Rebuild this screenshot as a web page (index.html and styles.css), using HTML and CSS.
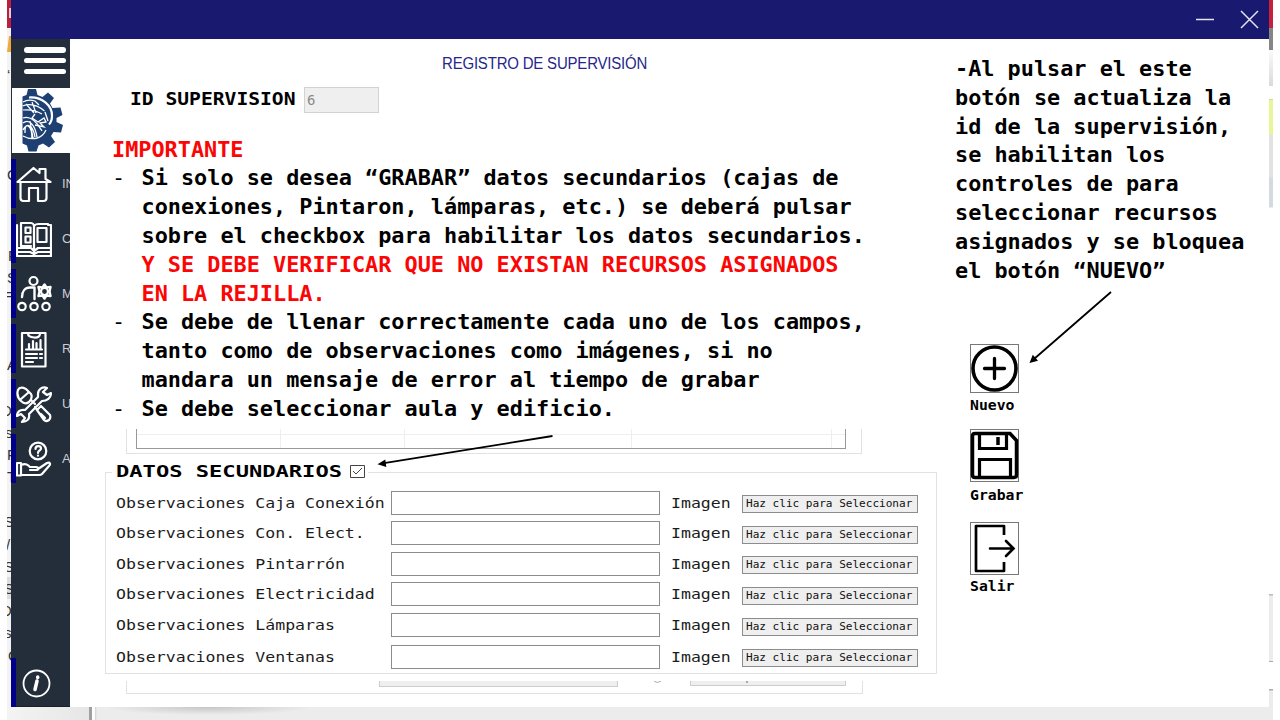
FILE: index.html
```html
<!DOCTYPE html>
<html lang="es">
<head>
<meta charset="utf-8">
<title>Registro de supervisión</title>
<link rel="stylesheet" href="styles.css">
</head>
<body>
<div class="desktop">
  <svg class="edge-left" width="4" height="720" viewBox="7 0 4 720">
    <rect x="7" width="4" height="720" fill="#f3f3f3"/>
    <rect x="7" width="4" height="28" fill="#b9203a"/>
    <path d="M10 8v10" stroke="#fff" stroke-width="1.5"/>
    <path d="M7 52l2-16h2v16z" fill="#f2a93b"/>
    <rect x="7" y="577" width="4" height="22" fill="#ddd"/>
    <g class="edge-text">
      <text x="7" y="80">‘</text><text x="7" y="180">C</text><text x="8" y="261">F</text><text x="7" y="283">S</text><text x="4" y="300">=</text>
      <text x="7" y="370">A</text><text x="1" y="416">D</text><text x="5" y="438">si</text><text x="7" y="460">F</text><text x="7" y="482">T</text>
      <text x="4" y="527">S</text><text x="6" y="550">/</text><text x="4" y="572">S</text><text x="4" y="594">S</text><text x="1" y="616">D</text><text x="4" y="638">s</text><text x="8" y="661">C</text>
    </g>
  </svg>
  <div class="window">
    <header class="titlebar">
      <svg width="66" height="20" viewBox="0 0 66 20" fill="none" stroke="#e4e4f4" stroke-width="1.5">
        <path d="M0 9.5h18M45 1l17 17M62 1L45 18"/>
      </svg>
    </header>
    <div class="body">
      <nav class="sidebar">
        <div class="burger"><i></i><i></i><i></i></div>
        <div class="logo">
          <svg width="58" height="64" viewBox="12 89 58 64">
            <path fill="#1d3f72" d="M22.500 97.500l4-1.500 1.500-6h8l1.500 6 5 2 5.500-4.500 6 5.500-4 5.500 2.500 4.500 8-.5 2 7.500-6 3v4l6.500 3-2 7.500-7.500-.5-2.500 4 4 6-6 5.500-6-4-4.500 2-2 6h-8l-1.500-6-4.500-2z"/>
            <g fill="none" stroke="#fff">
              <path d="M29 98.500c13-1 23 8 23 18 0 6-3 9-3 9" stroke-width="2.200"/>
              <path d="M22.500 107c8-3 16 0 22 5M23 111c9-1 14 1 19 4M23 103c5-3 9-2 12-1l4 4M26 105l8 9M32 103l4 11" stroke-width="1.200"/>
              <path d="M35 115l-3 4 6 4 6-4 2 4-6 1 4 4-9-2M45 113l3 9" stroke-width="1.300"/>
              <path d="M23 119c8-3 14 4 19 13M23 124c6-5 12 2 14 14M25 134c-1-12 7-9 7 6M23 131c4-8 10-5 12 7M23 137c9 5 19 3 23-6M30 122l3 17" stroke-width="1.300"/>
            </g>
          </svg>
        </div>
        <a class="item"><svg class="ico" viewBox="16 159 36 49"><path d="M17.500 182l16-14 6 5v-4h6v10l5 3zM20.500 183v15q0 3 3 3h5.500v-13h9v13h5.500q3 0 3-3v-15"/></svg><span>INICIO</span></a>
        <a class="item"><svg class="ico" viewBox="16 159 36 49"><path d="M21 168h10c2 0 3 2 3 3 1-2 3-2 5-2h9M21 168v23h10M17 170v31h34V170h-3M34 171v26M37.500 173h9v14h-9zM25.500 172.500h5v5.500h-5zM25.500 181.500h5v6h-5zM17 193h14l3 3 4-3h13M17 197h13l4 2 4-2h13"/></svg><span>CATÁLOGO</span></a>
        <a class="item"><svg class="ico" viewBox="16 159 36 49"><circle cx="33.500" cy="171" r="4"/><circle cx="22" cy="196.500" r="3.700"/><circle cx="34" cy="196.500" r="3.700"/><circle cx="46" cy="196.500" r="3.700"/><circle cx="44.500" cy="181.500" r="3.500"/><path d="M44.500 174.500l2 3 4-.5-1 4.500 1 4.500-4-.5-2 3-2-3-4 .5 1-4.500-1-4.500 4 .5zM34.500 189v-11.500H30c-5 0-8 4-8 9.500" stroke-width="2.400"/></svg><span>MOVIMIENTOS</span></a>
        <a class="item"><svg class="ico" viewBox="16 159 36 49"><path d="M22 168h23.500v33.500H22zM28 168.500q0 3.500 6 4t6-4M26 184.500h16M26 189h11M40 189h2M26 193h11M40 193h2M26 197h7M29 184v-5M33 184v-8M36.500 184v-6M40.500 184v-9"/></svg><span>REPORTES</span></a>
        <a class="item"><svg class="ico" viewBox="16 159 36 49"><path d="M18 170q2-4 8-1l5 5q2 4-2 8-4 3-8-1-5-5-3-11zM21 179l8-7M31 180l4 4M37 190l4-4 9 9q1 3-1 5-3 2-5 0zM37 190l-2-3M41 194l4 4M47 168c-4-2-9 1-9 6v3L25 190c-5-1-8 2-8 6l4-2 4 4-3 4c5 0 8-3 7-8l13-13c5 0 9-3 9-8l-4 2-4-3z"/></svg><span>UTILIDADES</span></a>
        <a class="item"><svg class="ico" viewBox="16 159 36 49"><circle cx="38" cy="176" r="8.300"/><path d="M35.500 174c0-4 5.500-3.500 5.500-.5 0 2-3 2-3 4.500M38 180.500v.2M17 188h4v12.500h-4zM21 190c5-2 7 0 9 2h6c3 0 3 3 0 3h-6M38 194l9-6c3-1 4 1 2 3l-7 8q-1 1-3 1H21"/></svg><span>AYUDA</span></a>
        <a class="item info"><svg class="ico" viewBox="16 159 36 49"><circle cx="36.500" cy="184.500" r="13" stroke-width="1.800"/><path d="M37.700 178v.4M37 182l-2 8.500" stroke-width="3.500"/></svg></a>
      </nav>
      <main class="main">
        <section class="form">
          <h1 class="title">REGISTRO DE SUPERVISIÓN</h1>
          <div class="idrow"><span class="idlabel">ID SUPERVISION</span><div class="idbox">6</div></div>
          <div class="notes">
            <p class="red">IMPORTANTE</p>
            <ul>
              <li>Si solo se desea “GRABAR” datos secundarios (cajas de<br>conexiones, Pintaron, lámparas, etc.) se deberá pulsar<br>sobre el checkbox para habilitar los datos secundarios.<br><span class="red">Y SE DEBE VERIFICAR QUE NO EXISTAN RECURSOS ASIGNADOS<br>EN LA REJILLA.</span></li>
              <li>Se debe de llenar correctamente cada uno de los campos,<br>tanto como de observaciones como imágenes, si no<br>mandara un mensaje de error al tiempo de grabar</li>
              <li>Se debe seleccionar aula y edificio.</li>
            </ul>
          </div>
          <div class="gridbox"><div class="gridtable"><i></i><i></i><i></i><i></i><i></i></div></div>
          <div class="group">
            <div class="legend"><span class="legendtext">DATOS SECUNDARIOS</span>
              <svg width="15" height="13" viewBox="0 0 15 13" fill="none" stroke="#444"><path d="M.5.5h14v12H.5z"/><path d="M3 6l3 3 6-6"/></svg>
            </div>
            <div class="fields">
              <label>Observaciones Caja Conexión</label><div class="input"></div><label>Imagen</label><div class="btn"><span>Haz clic para Seleccionar</span></div>
              <label>Observaciones Con. Elect.</label><div class="input"></div><label>Imagen</label><div class="btn"><span>Haz clic para Seleccionar</span></div>
              <label>Observaciones Pintarrón</label><div class="input"></div><label>Imagen</label><div class="btn"><span>Haz clic para Seleccionar</span></div>
              <label>Observaciones Electricidad</label><div class="input"></div><label>Imagen</label><div class="btn"><span>Haz clic para Seleccionar</span></div>
              <label>Observaciones Lámparas</label><div class="input"></div><label>Imagen</label><div class="btn"><span>Haz clic para Seleccionar</span></div>
              <label>Observaciones Ventanas</label><div class="input"></div><label>Imagen</label><div class="btn"><span>Haz clic para Seleccionar</span></div>
            </div>
          </div>
          <div class="under"><div class="under-input"></div><svg width="10" height="4" viewBox="0 0 10 4"><path d="M1 0q3 3 7 0" fill="none" stroke="#aaa"/></svg><div class="under-btn"><i></i></div></div>
        </section>
        <aside class="side">
          <p class="hint">-Al pulsar el este<br>botón se actualiza la<br>id de la supervisión,<br>se habilitan los<br>controles de para<br>seleccionar recursos<br>asignados y se bloquea<br>el botón “NUEVO”</p>
          <div class="action new"><svg width="49" height="49" viewBox="0 0 49 49"><rect x=".5" y=".5" width="48" height="48"/><circle cx="24.500" cy="24.500" r="21.500" stroke-width="3.600"/><path d="M24.500 14.500v20M14.500 24.500h20" stroke-width="3.300" stroke-linecap="round"/></svg><span>Nuevo</span></div>
          <div class="action save"><svg width="49" height="53" viewBox="0 0 49 53"><rect x=".5" y=".5" width="48" height="52"/><path d="M5 4.500h35l6.500 7V46q0 2.500-2.500 2.500H5Q2.500 48.500 2.500 46V7q0-2.500 2.500-2.500z" stroke-width="3.500"/><path d="M9.500 4v15.500h27V4M9.500 48V30.500h31V48" stroke-width="3.200"/><path d="M28 8v8" stroke-width="3.500"/></svg><span>Grabar</span></div>
          <div class="action exit"><svg width="49" height="53" viewBox="0 0 49 53"><rect x=".5" y=".5" width="48" height="52"/><path d="M34 13V4H6v45h28v-9" stroke-width="2.700" stroke-linejoin="round"/><path d="M20 26.500h23M36 19l7.500 7.500L36 34" stroke-width="2.600" stroke-linecap="round"/></svg><span>Salir</span></div>
        </aside>
      </main>
    </div>
  </div>
  <div class="edge-right"></div>
  <svg class="arrows" width="1280" height="720" viewBox="0 0 1280 720" stroke="#000" stroke-width="1.800">
    <path d="M552.500 436L384 463.200M1111 292L1034 359"/>
    <path d="M377.500 464.200l7.800-4.800 1 7.600zM1029.500 363l3.300-8.200 5.200 6z" stroke="none"/>
  </svg>
</div>
</body>
</html>
```
FILE: styles.css
```css
* { box-sizing: border-box; }
body { margin: 0; background: #fff; }
p, ul, h1 { margin: 0; padding: 0; }
.desktop {
  position: relative; display: flex; width: 1280px; height: 720px; padding-left: 7px; overflow: hidden;
  background:
    linear-gradient(#fff, #fff) 0 0 / 7px 720px no-repeat,
    linear-gradient(#fff, #fff) 1273px 0 / 7px 720px no-repeat,
    linear-gradient(90deg, #f3f3f3, #e6e6e6 78px, #a0a0a0 78px, #a0a0a0 81px, #fdfdfd 81px, #fdfdfd 84px, #d0d0d0 84px, #ececec 86px) 11px 707px / 1262px 13px no-repeat;
}
.edge-left { flex: none; overflow: hidden; }
.edge-text { font: 15px "Liberation Sans", sans-serif; fill: #333; }
.window { width: 1258px; height: 707px; display: flex; flex-direction: column; background: #fff; flex: none; position: relative; }
.window::after {
  content: ""; position: absolute; left: 92px; top: 707px; width: 210px; height: 8px;
  background: radial-gradient(ellipse at 50% 0, #c6c6c6, #ececec00 70%);
}
.edge-right {
  width: 4px; height: 720px; flex: none;
  background: linear-gradient(#c8203a 28px, #858585 28px, #858585 50px, #fafafa 50px, #dadada 86px, #fff 86px, #fff 99px, #bcc78a 99px, #e8f598 100px, #e8f598 134px, #e2e2e2 135px, #e2e2e2 177px, #d3dae2 178px, #d3dae2 207px, #fff 208px, #fff 594px, #bbb 594px, #bbb 595px, #ececec 596px, #ececec 661px, #aaa 661px, #aaa 662px, #fff 662px, #fff 689px, #aaa 689px, #aaa 690px, #ececec 691px);
}
.titlebar { height: 39px; background: #191970; display: flex; justify-content: flex-end; padding: 10px 7px 0 0; flex: none; }
.body { display: flex; flex: 1; }
.sidebar { width: 59px; background: #242e3b; display: flex; flex-direction: column; border-bottom: 1px solid #18202a; }
.burger { height: 49px; padding: 8px 4px 0 13px; display: flex; flex-direction: column; gap: 5.3px; flex: none; }
.burger i { height: 5.5px; border-radius: 3px; background: #fff; }
.logo { height: 65px; background: #fff; margin-left: 1px; margin-bottom: 6px; flex: none; }
.item { display: flex; height: 49px; margin-bottom: 6px; border-left: 5px solid #00008b; overflow: hidden; flex: none; align-items: center; }
.item span { margin-left: 10px; color: #c8cdd3; font: 13px "Liberation Sans", sans-serif; }
.item.info { margin-top: auto; margin-bottom: -1px; }
.ico { width: 36px; height: 49px; flex: none; fill: none; stroke: #fff; stroke-width: 2.2; stroke-linejoin: round; stroke-linecap: round; }
.main { display: flex; flex: 1; }
.form { width: 866px; padding-left: 35px; display: flex; flex-direction: column; flex: none; }
.title { margin: 16px 0 0 337px; height: 18px; font: 16px/18px "Liberation Sans", sans-serif; color: #26268c; white-space: nowrap; transform: scaleX(.936); transform-origin: 0 0; letter-spacing: -.2px; }
.idrow { display: flex; margin: 14px 0 0 25px; height: 26px; }
.idlabel { width: 174px; font: bold 17px/25px "DejaVu Sans Mono", monospace; white-space: pre; transform: scaleX(1.155); transform-origin: 0 0; }
.idbox { flex: none; width: 75px; border: 1px solid #d2d2d2; background: #efefef; color: #8a8a8a; font: 14px/25px "DejaVu Sans Mono", monospace; padding-left: 2px; }
.notes, .hint { font: bold 21.850px/28.800px "DejaVu Sans Mono", monospace; color: #000; white-space: nowrap; }
.notes { margin: 22.600px 0 0 7px; height: 287.400px; }
.notes ul { list-style: none; }
.notes li { padding-left: 29.500px; }
.notes li::before { content: "-"; display: inline-block; width: 29.500px; margin-left: -29.500px; font-weight: normal; }
.red { color: #fb0505; }
.gridbox { margin: 6px 0 0 21px; width: 736px; height: 25px; border: 1px solid #e2e2e2; border-top: 0; padding: 0 15px 4px 9px; }
.gridtable { height: 20px; border: 1.500px solid #999; border-top: 0; display: flex; background: linear-gradient(#eee, #eee) 0 5px / 100% 1px no-repeat; }
.gridtable i { border-right: 1px solid #eee; width: 144px; }
.gridtable i:nth-child(2) { width: 124px; }
.gridtable i:nth-child(3) { width: 227px; }
.gridtable i:nth-child(4) { width: 200px; }
.gridtable i:nth-child(5) { border: 0; width: auto; }
.group { margin-top: 18px; width: 832px; height: 202px; border: 1px solid #e2e2e2; padding-left: 6px; }
.legend { display: flex; align-items: center; width: 256px; height: 20px; margin-top: -11px; background: #fff; padding-left: 4px; }
.legend svg { flex: none; }
.legendtext { flex: none; width: 234px; font: bold 16px/22px "DejaVu Sans Mono", monospace; transform: scaleX(1.38); transform-origin: 0 0; white-space: nowrap; }
.fields { display: grid; grid-template-columns: 275px 280px 71px 176px; grid-template-rows: 30.300px 30.500px 30.500px 31.200px 31.300px 30px; margin: 9px 0 0 4px; }
.fields label { font: 13.300px/25px "DejaVu Sans Mono", monospace; color: #1c1c1c; transform: scaleX(1.243); transform-origin: 0 0; white-space: nowrap; }
.input { width: 269px; height: 24px; border: 1px solid #8c8c8c; }
.btn { height: 18px; margin-top: 4.500px; border: 1px solid #8c8c8c; background: #efefef; padding-left: 3px; overflow: hidden; }
.btn span { display: block; font: 10px/16px "DejaVu Sans Mono", monospace; color: #111; transform: scaleX(1.105); transform-origin: 0 0; white-space: nowrap; }
.under { margin: 7px 0 0 21px; width: 737px; height: 13px; border: 1px solid #e2e2e2; border-top: 0; padding-left: 252px; display: flex; align-items: flex-start; }
.under-input { width: 239px; height: 6px; border: 1px solid #ccc; border-top: 0; background: #efefef; margin-right: 35px; }
.under-btn { width: 156px; height: 5px; border: 1px solid #ccc; border-top: 0; background: #efefef; margin-left: 27px; }
.under-btn i { display: block; width: 2px; height: 2px; margin-left: 55px; background: #aaa; }
.side { padding: 16px 0 0 19px; }
.hint { height: 230px; }
.action { margin-left: 15px; display: flex; flex-direction: column; }
.action svg { fill: none; stroke: #000; }
.action svg rect { stroke: #777; }
.action span { font: bold 13.300px/16px "DejaVu Sans Mono", monospace; transform: scaleX(1.11); transform-origin: 0 0; margin-top: 5px; }
.new { margin-top: 59px; height: 85px; }
.save { height: 93px; }
.save span { margin-top: 6px; }
.exit span { margin-top: 4px; }
.arrows { position: absolute; left: 0; top: 0; pointer-events: none; }
```
